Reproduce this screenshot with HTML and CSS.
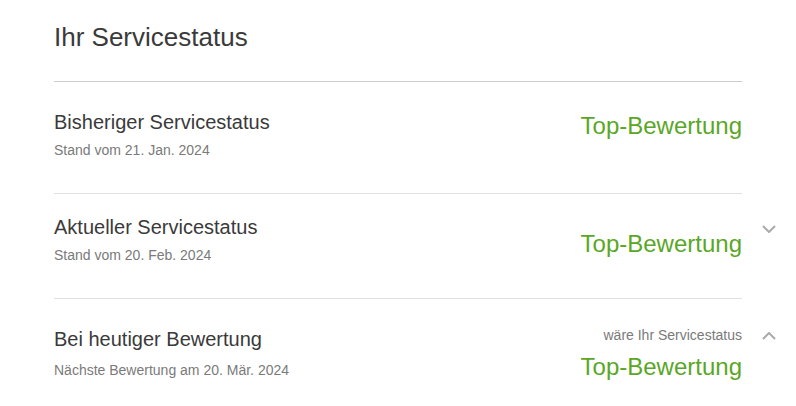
FILE: index.html
```html
<!DOCTYPE html>
<html lang="de">
<head>
<meta charset="utf-8">
<title>Ihr Servicestatus</title>
<link rel="stylesheet" href="styles.css">
</head>
<body>
<div class="page">
  <div class="header">
    <h1 class="title">Ihr Servicestatus</h1>
  </div>

  <div class="row row1">
    <div class="row-body">
      <div class="left">
        <div class="row-title">Bisheriger Servicestatus</div>
        <div class="row-sub">Stand vom 21. Jan. 2024</div>
      </div>
      <div class="right">
        <div class="rating">Top-Bewertung</div>
      </div>
    </div>
    <div class="chev-col"></div>
  </div>

  <div class="row row2">
    <div class="row-body">
      <div class="left">
        <div class="row-title">Aktueller Servicestatus</div>
        <div class="row-sub">Stand vom 20. Feb. 2024</div>
      </div>
      <div class="right">
        <div class="rating">Top-Bewertung</div>
      </div>
    </div>
    <div class="chev-col">
      <svg class="chev" width="14" height="8" viewBox="0 0 14 8"><polyline points="1,1 7,7 13,1" fill="none" stroke="#aaa" stroke-width="2"/></svg>
    </div>
  </div>

  <div class="row row3">
    <div class="row-body">
      <div class="left">
        <div class="row-title">Bei heutiger Bewertung</div>
        <div class="row-sub">Nächste Bewertung am 20. Mär. 2024</div>
      </div>
      <div class="right">
        <div class="note">wäre Ihr Servicestatus</div>
        <div class="rating">Top-Bewertung</div>
      </div>
    </div>
    <div class="chev-col">
      <svg class="chev" width="14" height="8" viewBox="0 0 14 8"><polyline points="1,7 7,1 13,7" fill="none" stroke="#aaa" stroke-width="2"/></svg>
    </div>
  </div>
</div>
</body>
</html>
```

FILE: styles.css
```css
html, body {
  margin: 0;
  padding: 0;
  background: #fff;
}
body {
  font-family: "Liberation Sans", Arial, sans-serif;
  color: #3a3a3a;
}
.page {
  margin-left: 54px;
  width: 722px;
}
.header {
  width: 688px;
  padding-top: 22px;
  padding-bottom: 29px;
  border-bottom: 1px solid #cccccc;
}
.title {
  margin: 0;
  font-size: 26px;
  line-height: 30px;
  font-weight: normal;
  color: #3a3a3a;
}
.row {
  display: flex;
}
.row-body {
  width: 688px;
  display: flex;
  justify-content: space-between;
  border-bottom: 1px solid #e0e0e0;
}
.row-title {
  font-size: 20px;
  line-height: 23px;
  color: #3a3a3a;
}
.row-sub {
  margin-top: 8px;
  font-size: 14px;
  line-height: 16px;
  color: #7a7a7a;
}
.right {
  display: flex;
  flex-direction: column;
  align-items: flex-end;
}
.rating {
  font-size: 24px;
  line-height: 28px;
  color: #5aa727;
}
.note {
  font-size: 14px;
  line-height: 16px;
  color: #7a7a7a;
}
.chev-col {
  margin-left: 20px;
  width: 14px;
}
.chev {
  display: block;
}

.row1 .row-body {
  padding-top: 29px;
  padding-bottom: 35px;
}
.row1 .rating {
  margin-top: 1px;
}

.row2 .row-body {
  padding-top: 22px;
  padding-bottom: 35px;
}
.row2 .rating {
  margin-top: 14px;
}
.row2 .chev-col {
  padding-top: 31px;
}

.row3 .row-body {
  padding-top: 29px;
  padding-bottom: 28px;
  border-bottom: none;
}
.row3 .row-sub {
  margin-top: 11px;
}
.row3 .right {
  margin-top: -1px;
}
.row3 .rating {
  margin-top: 10px;
}
.row3 .chev-col {
  padding-top: 33px;
}
```
